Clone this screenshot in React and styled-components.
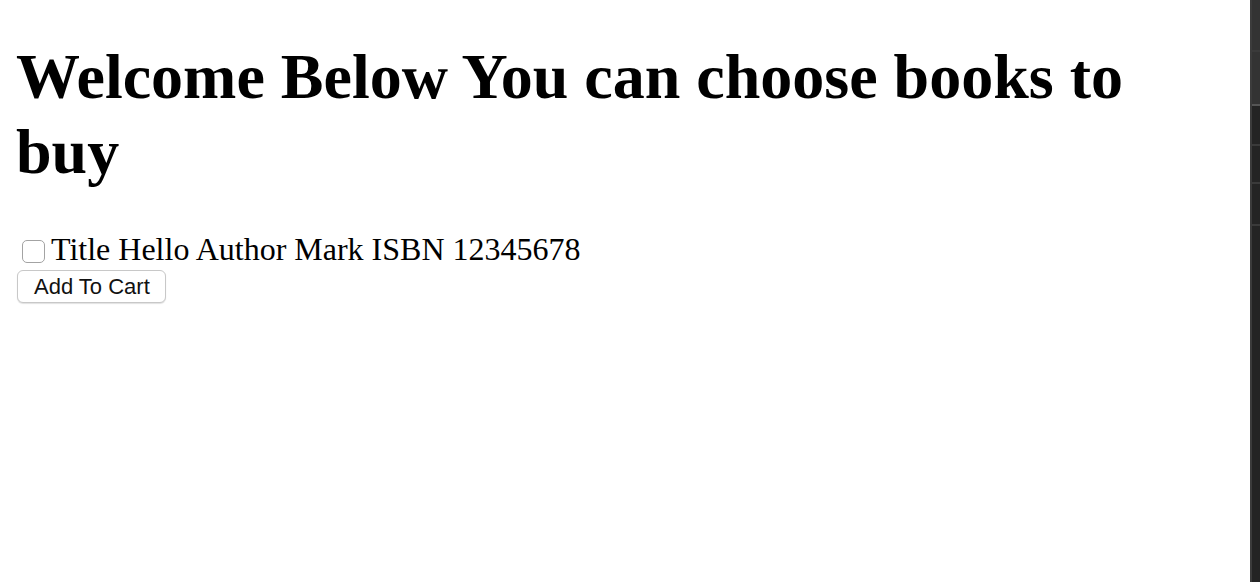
import styled, { createGlobalStyle } from "styled-components";

const GlobalStyle = createGlobalStyle`
  html, body {
    margin: 0;
    padding: 0;
    background: #ffffff;
  }
`;

const Window = styled.div`
  display: flex;
  width: 100%;
  height: 100vh;
  overflow: hidden;
`;

const Page = styled.div`
  flex: 1;
  padding: 0 16px;
  font-family: 'Liberation Serif', 'Times New Roman', serif;
  color: #000;
`;

const Heading = styled.h1`
  font-size: 64px;
  line-height: 75px;
  font-weight: 700;
  margin: 39px 0 42px 0;
  max-width: 1150px;
`;

const BookRow = styled.label`
  display: flex;
  align-items: center;
  font-size: 32px;
  line-height: 36px;
  height: 36px;
`;

const Check = styled.input.attrs({ type: "checkbox" })`
  appearance: none;
  width: 23px;
  height: 23px;
  margin: 4px 6px 0 6px;
  border: 1.5px solid #a3a3a3;
  border-radius: 5px;
  background: #fff;
  box-sizing: border-box;
`;

const CartButton = styled.button`
  display: block;
  margin: 3px 0 0 1px;
  height: 33px;
  padding: 0 15px 0 16px;
  font-family: 'Liberation Sans', Arial, sans-serif;
  font-size: 22px;
  color: #111;
  background: #fff;
  border: 1px solid #c8c8c8;
  border-radius: 6px;
  box-shadow: 0 1px 1px rgba(0, 0, 0, 0.12);
`;

const SideStrip = styled.div`
  width: 10px;
  display: flex;
  flex-direction: column;
  background: #242424;
  border-left: 2px solid #3c3c3c;
  box-sizing: border-box;
`;

const Pane = styled.div`
  height: ${(p) => p.$h}px;
  background: ${(p) => p.$bg};
  border-bottom: 2px solid ${(p) => p.$line};
  flex-shrink: 0;
`;

const panes = [
  { h: 50, bg: "#333333", line: "#3a3a3a" },
  { h: 52, bg: "#333333", line: "#555555" },
  { h: 38, bg: "#242424", line: "#3a3a3a" },
  { h: 36, bg: "#242424", line: "#3a3a3a" },
  { h: 40, bg: "#242424", line: "#3a3a3a" },
];

const App = () => {
  return (
    <Window>
      <GlobalStyle />
      <Page>
        <Heading>Welcome Below You can choose books to buy</Heading>
        <BookRow>
          <Check />
          Title Hello Author Mark ISBN 12345678
        </BookRow>
        <CartButton>Add To Cart</CartButton>
      </Page>
      <SideStrip>
        {panes.map((p, i) => (
          <Pane key={i} $h={p.h} $bg={p.bg} $line={p.line} />
        ))}
      </SideStrip>
    </Window>
  );
};

export default App;
